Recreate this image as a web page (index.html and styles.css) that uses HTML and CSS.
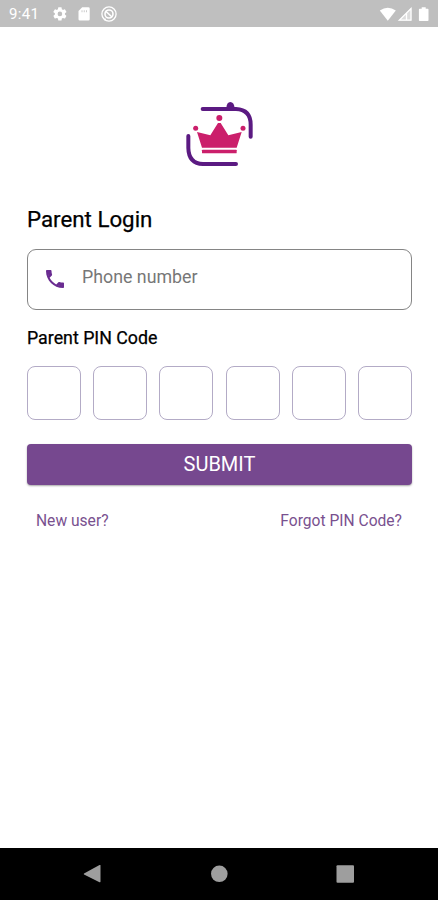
FILE: index.html
```html
<!DOCTYPE html>
<html lang="en">
<head>
<meta charset="utf-8">
<title>Parent Login</title>
<link rel="stylesheet" href="styles.css">
</head>
<body>
<div class="screen">
  <header class="status">
    <span class="time">9:41</span>
    <svg class="status-left" width="66" height="18" viewBox="0 0 66 18" fill="#fff">
      <g transform="translate(.5 .5) scale(.7)"><path d="M19.14 12.94c.04-.3.06-.61.06-.94 0-.32-.02-.64-.07-.94l2.03-1.58a.49.49 0 0 0 .12-.61l-1.92-3.32a.49.49 0 0 0-.59-.22l-2.39.96a7 7 0 0 0-1.62-.94l-.36-2.54A.48.48 0 0 0 13.92 2.4h-3.84a.47.47 0 0 0-.47.41l-.36 2.54c-.59.24-1.13.57-1.62.94l-2.39-.96a.48.48 0 0 0-.59.22L2.74 8.87a.48.48 0 0 0 .12.61l2.03 1.58a6 6 0 0 0-.02 1.88l-2.03 1.58a.49.49 0 0 0-.12.61l1.92 3.32c.12.22.37.29.59.22l2.39-.96c.5.38 1.03.7 1.62.94l.36 2.54c.05.24.24.41.48.41h3.84c.24 0 .44-.17.47-.41l.36-2.54a7 7 0 0 0 1.62-.94l2.39.96c.22.08.47 0 .59-.22l1.92-3.32a.47.47 0 0 0-.12-.61zM12 15.3a3.3 3.3 0 1 1 0-6.6 3.3 3.3 0 0 1 0 6.6z"/></g>
      <path fill-rule="evenodd" d="M31.2 2.2h6.2q1.300 0 1.300 1.300v10.800q0 1.300-1.300 1.300h-8.600q-1.300 0-1.300-1.300V6.100z M30.600 5.200v2h.8v-2zM32.800 5.200v2h.8v-2zM35 5.200v2h.8v-2z"/>
      <g fill="none" stroke="#fff"><circle cx="58" cy="9" r="7.100" stroke-width="1.300"/><circle cx="58" cy="9" r="4" stroke-width="1.600"/><path d="M54.500 6l6.500 6" stroke-width="1.600"/><path d="M54 13.500v2" stroke-width="1.500"/></g>
    </svg>
    <svg class="status-right" width="52" height="18" viewBox="0 0 52 18">
      <path fill="#fff" d="M.8 5.600Q8.800-.2 16.800 5.600L8.800 15.800z"/>
      <path fill="#fff" fill-opacity=".45" d="M19.500 15.700L32.300 2.700v13z"/>
      <path fill="none" stroke="#fff" stroke-width="1.300" d="M20.300 15.200L32 3.600v11.600zM27.500 8v7"/>
      <path fill="#fff" d="M40.700 3.700h2V2.300h4v1.400h2q.8 0 .8.800v10.700q0 .8-.8.800h-8q-.8 0-.8-.8V4.500q0-.8.800-.8z"/>
    </svg>
  </header>
  <main class="content">
    <svg class="logo" width="90" height="90" viewBox="0 0 270 270">
      <g fill="none" stroke="#5b1a82" stroke-width="12" stroke-linecap="round">
        <path d="M83 57H183Q227 59 227 104V140"/>
        <path d="M40 138V174Q41 221 84 222H183"/>
      </g>
      <path fill="#5b1a82" d="M154 55Q155 36 166 36T179 55z"/>
      <g fill="#cb1f6b">
        <circle cx="133" cy="84" r="9"/><circle cx="62" cy="115" r="7.500"/><circle cx="204" cy="115" r="7.500"/>
        <path d="M66 126L106 136L129 99H137L160 136L200 126L185 173H81z"/>
        <rect x="81" y="179" width="104" height="11" rx="2"/>
      </g>
    </svg>
    <h1 class="title">Parent Login</h1>
    <label class="phone">
      <svg class="phone-icon" width="24" height="24" viewBox="0 0 24 24" fill="#6a2c91"><path d="M6.540 5c.06.89.21 1.760.45 2.590l-1.200 1.200c-.41-1.200-.67-2.470-.76-3.790h1.510m9.860 12.020c.85.24 1.720.39 2.600.45v1.490c-1.320-.09-2.590-.35-3.800-.75l1.200-1.190M7.500 3H4c-.55 0-1 .45-1 1 0 9.390 7.610 17 17 17 .55 0 1-.45 1-1v-3.490c0-.55-.45-1-1-1-1.240 0-2.450-.2-3.570-.57-.35-.12-.74-.02-1.020.24l-2.200 2.200c-2.830-1.450-5.150-3.760-6.590-6.590l2.200-2.200c.28-.28.36-.67.25-1.020C8.700 6.450 8.500 5.250 8.500 4c0-.55-.45-1-1-1z"/><path d="M4.500 4h3l.5 4-2.500 2zM20 19.500v-3l-4-.5-2 2.500z"/></svg>
      <span class="placeholder">Phone number</span>
    </label>
    <h2 class="pin-label">Parent PIN Code</h2>
    <div class="pins"><i class="pin"></i><i class="pin"></i><i class="pin"></i><i class="pin"></i><i class="pin"></i><i class="pin"></i></div>
    <button class="submit"><span>SUBMIT</span></button>
    <div class="links"><a>New user?</a><a>Forgot PIN Code?</a></div>
  </main>
  <nav class="nav">
    <svg width="438" height="52" viewBox="0 0 438 52" fill="#9e9e9e">
      <path d="M84 25.500L99.500 17q1-.4 1 .6v16q0 1-1 .6L84 26.500q-.5-.5 0-1z"/>
      <circle cx="219.300" cy="25.800" r="8.300"/>
      <rect x="336.500" y="17.300" width="17.500" height="17.500" rx="1"/>
    </svg>
  </nav>
</div>
</body>
</html>
```
FILE: styles.css
```css
* { box-sizing: border-box; }
body { margin: 0; font-family: Roboto, "Liberation Sans", sans-serif; background: #fff; }
.screen { width: 438px; height: 900px; display: flex; flex-direction: column; overflow: hidden; }
.status { height: 27px; flex: none; background: #bfbfbf; display: flex; align-items: center; padding: 1px 7px 0 9px; }
.time { width: 42px; color: #fff; font-size: 15px; line-height: 18px; letter-spacing: .3px; }
.status-left { display: block; }
.status-right { display: block; margin-left: auto; }
.content { flex: 1; display: flex; flex-direction: column; padding: 63px 26px 0 27px; }
.logo { display: block; margin-left: 148px; }
.title { margin: 25px 0 0; font-size: 22.300px; line-height: 28px; font-weight: 400; color: #000; -webkit-text-stroke: .25px #000; }
.phone { margin-top: 16px; height: 61px; border: 1px solid #858585; border-radius: 9px; display: flex; align-items: center; padding-left: 15px; }
.phone-icon { margin-top: -2px; }
.placeholder { margin: -7px 0 0 15px; font-size: 17.800px; color: #777; }
.pin-label { margin: 17px 0 0; font-size: 17.800px; line-height: 22px; font-weight: 400; color: #000; -webkit-text-stroke: .25px #000; }
.pins { margin-top: 17px; display: flex; justify-content: space-between; }
.pin { width: 54px; height: 54px; border: 1px solid #b3abc6; border-radius: 8px; }
.submit { margin-top: 24px; height: 41px; border: 0; border-radius: 4px; padding: 0; background: #76488f; color: #fff; font: 400 20px/41px Roboto, sans-serif; box-shadow: 0 1px 2px rgba(0, 0, 0, .35); }
.links { margin-top: 26px; display: flex; justify-content: space-between; padding: 0 10px 0 9px; font-size: 15.600px; line-height: 20px; color: #79518f; }
.nav { height: 52px; flex: none; background: #000; }
.nav svg { display: block; }
```
